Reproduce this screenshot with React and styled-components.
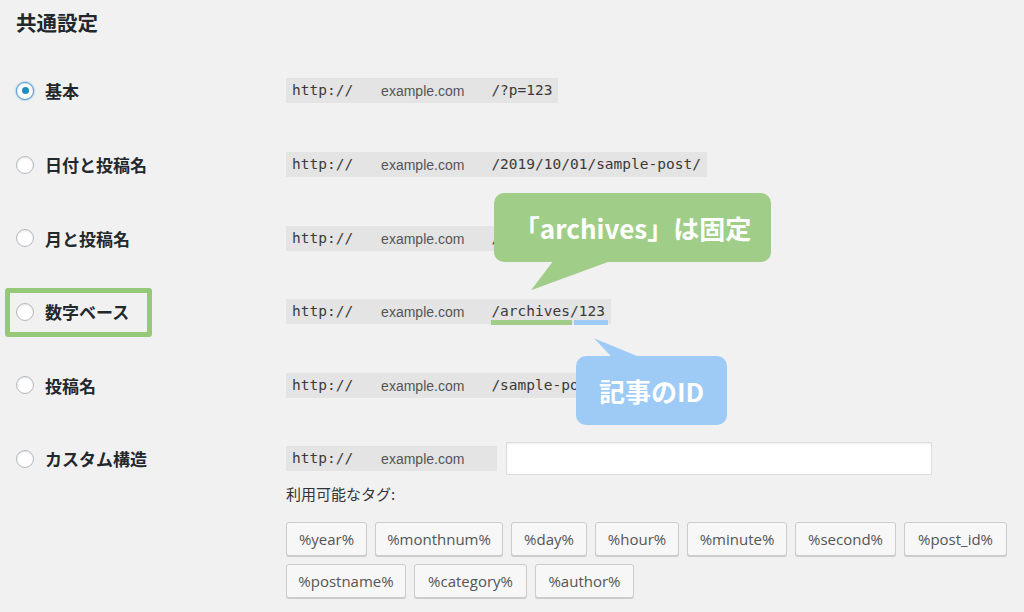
import React from "react";
import styled, { createGlobalStyle, css } from "styled-components";

const GlobalStyle = createGlobalStyle`
  html, body {
    margin: 0;
    padding: 0;
    background: #f1f1f1;
  }
  body {
    width: 1024px;
    height: 612px;
    overflow: hidden;
    font-family: "Noto Sans CJK JP", "Noto Sans", sans-serif;
    color: #23282d;
  }
`;

const Page = styled.div`
  padding: 8px 0 0 16px;
`;

const Title = styled.h2`
  margin: 0 0 18.2px;
  font-size: 20.5px;
  line-height: 28px;
  font-weight: 700;
  color: #23282d;
`;

const Row = styled.div`
  display: grid;
  grid-template-columns: 270px 1fr;
  align-items: start;
  padding: 20.3px 0;
`;

const Label = styled.label`
  position: relative;
  display: flex;
  align-items: center;
  gap: 11px;
  height: 33px;
  font-size: 17px;
  font-weight: 700;
  color: #23282d;
  ${(p) =>
    p.$highlight &&
    css`
      &::before {
        content: "";
        position: absolute;
        left: -11px;
        top: -7px;
        width: 147px;
        height: 49px;
        box-sizing: border-box;
        border: 5px solid #96c879;
        border-radius: 3px;
      }
    `}
`;

const Radio = styled.span`
  box-sizing: border-box;
  width: 18px;
  height: 18px;
  border-radius: 50%;
  background: #fff;
  border: 1px solid ${(p) => (p.$checked ? "#5b9dd9" : "#b4b9be")};
  box-shadow: ${(p) =>
    p.$checked
      ? "0 0 2px rgba(30,140,190,.8), inset 0 1px 2px rgba(0,0,0,.07)"
      : "inset 0 1px 2px rgba(0,0,0,.1)"};
  display: flex;
  align-items: center;
  justify-content: center;
  flex: none;
  &::after {
    content: "";
    display: ${(p) => (p.$checked ? "block" : "none")};
    width: 7px;
    height: 7px;
    border-radius: 50%;
    background: #1e8cbe;
  }
`;

const Content = styled.div`
  position: relative;
`;

const Line = styled.div`
  display: flex;
  align-items: center;
  height: 33px;
`;

const Code = styled.code`
  display: inline-flex;
  align-items: stretch;
  height: 25px;
  background: #e4e4e4;
  padding: 0 6px;
`;

const Mono = styled.span`
  position: relative;
  font-family: "DejaVu Sans Mono", "Liberation Mono", monospace;
  font-size: 14.5px;
  line-height: 25px;
  color: #3a3a3a;
`;

const Domain = styled.span`
  font-family: "Liberation Sans", Arial, sans-serif;
  font-size: 14px;
  line-height: 27px;
  color: #555;
  margin: 0 27px 0 28px;
`;

const Mark = styled.span`
  position: relative;
  &::after {
    content: "";
    position: absolute;
    top: calc(100% + 1px);
    left: ${(p) => p.$left}px;
    right: ${(p) => p.$right}px;
    height: 5px;
    background: ${(p) => p.$color};
  }
`;

const Input = styled.div`
  box-sizing: border-box;
  margin-left: 9px;
  width: 426px;
  height: 33px;
  background: #fff;
  border: 1px solid #ddd;
  box-shadow: inset 0 1px 2px rgba(0, 0, 0, 0.07);
`;

const TagsLabel = styled.div`
  margin-top: 8px;
  font-size: 15px;
  line-height: 22px;
  color: #333;
`;

const TagList = styled.div`
  margin-top: 17px;
  width: 724px;
  display: flex;
  flex-wrap: wrap;
  gap: 8px;
`;

const TagButton = styled.button`
  box-sizing: border-box;
  width: ${(p) => p.$w}px;
  height: 34px;
  padding: 0;
  background: #f7f7f7;
  border: 1px solid #ccc;
  border-radius: 3px;
  box-shadow: 0 1px 0 #ccc;
  font-family: "Open Sans", "Noto Sans", sans-serif;
  font-size: 15px;
  color: #555;
  text-align: center;
`;

const Callout = styled.div`
  position: absolute;
  left: ${(p) => p.$left}px;
  top: ${(p) => p.$top}px;
  width: ${(p) => p.$w}px;
  height: 69px;
  border-radius: 10px;
  background: ${(p) => p.$color};
  color: #fff;
  font-size: 26px;
  font-weight: 700;
  display: flex;
  align-items: center;
  justify-content: center;
  z-index: 2;
  &::after {
    content: "";
    position: absolute;
    background: ${(p) => p.$color};
    ${(p) => p.$tail}
  }
`;

const greenTail = css`
  left: 37px;
  top: 68px;
  width: 79px;
  height: 29px;
  clip-path: polygon(22px 0, 100% 0, 0 100%);
`;

const blueTail = css`
  left: 18px;
  top: -18px;
  width: 46px;
  height: 19px;
  clip-path: polygon(0 0, 18px 100%, 100% 100%);
`;

const GREEN = "#a0ce88";
const BLUE = "#9dcbf6";

const rows = [
  { label: "基本", path: "/?p=123", checked: true },
  { label: "日付と投稿名", path: "/2019/10/01/sample-post/" },
  { label: "月と投稿名", path: "/2019/10/sample-post/" },
  { label: "数字ベース", numeric: true, highlight: true },
  { label: "投稿名", path: "/sample-post/" },
];

const tags = [
  ["%year%", 81],
  ["%monthnum%", 128],
  ["%day%", 76],
  ["%hour%", 84],
  ["%minute%", 100],
  ["%second%", 101],
  ["%post_id%", 103],
  ["%postname%", 120],
  ["%category%", 113],
  ["%author%", 99],
];

export default function App() {
  return (
    <>
      <GlobalStyle />
      <Page>
        <Title>共通設定</Title>
        {rows.map((r) => (
          <Row key={r.label}>
            <Label $highlight={r.highlight}>
              <Radio $checked={r.checked} />
              {r.label}
            </Label>
            <Content>
              <Line>
                <Code>
                  <Mono>http://</Mono>
                  <Domain>example.com</Domain>
                  {r.numeric ? (
                    <Mono>
                      <Mark $color={GREEN} $left={0} $right={-2}>
                        /archives
                      </Mark>
                      <Mark $color={BLUE} $left={4} $right={-3}>
                        /123
                      </Mark>
                    </Mono>
                  ) : (
                    <Mono>{r.path}</Mono>
                  )}
                </Code>
              </Line>
              {r.numeric && (
                <>
                  <Callout $color={GREEN} $left={208} $top={-102} $w={277} $tail={greenTail}>
                    「archives」は固定
                  </Callout>
                  <Callout $color={BLUE} $left={290} $top={61} $w={151} $tail={blueTail}>
                    記事のID
                  </Callout>
                </>
              )}
            </Content>
          </Row>
        ))}
        <Row>
          <Label>
            <Radio />
            カスタム構造
          </Label>
          <Content>
            <Line>
              <Code>
                <Mono>http://</Mono>
                <Domain>example.com</Domain>
              </Code>
              <Input />
            </Line>
            <TagsLabel>利用可能なタグ:</TagsLabel>
            <TagList>
              {tags.map(([t, w]) => (
                <TagButton key={t} $w={w}>
                  {t}
                </TagButton>
              ))}
            </TagList>
          </Content>
        </Row>
      </Page>
    </>
  );
}
